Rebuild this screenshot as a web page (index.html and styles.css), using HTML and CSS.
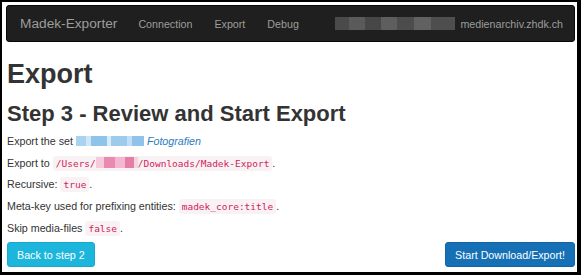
FILE: index.html
```html
<!DOCTYPE html>
<html lang="en">
<head>
    <meta charset="UTF-8">
    <meta name="viewport" content="width=device-width, initial-scale=1.0">
    <title>Madek-Exporter - Export</title>
    <link rel="stylesheet" href="styles.css">
</head>
<body>
<div class="window">
    <div class="navbar">
        <a class="brand" href="#">Madek-Exporter</a>
        <ul class="nav">
            <li><a href="#">Connection</a></li>
            <li><a href="#">Export</a></li>
            <li><a href="#">Debug</a></li>
        </ul>
        <div class="nav-right">
            <span class="blur blur-user"></span>
            <span class="host">medienarchiv.zhdk.ch</span>
        </div>
    </div>
    <div class="content">
        <h1>Export</h1>
        <h2>Step 3 - Review and Start Export</h2>
        <p>Export the set <span class="blur blur-set"></span> <a class="set-link" href="#">Fotografien</a></p>
        <p>Export to <code>/Users/<span class="blur blur-path"></span>/Downloads/Madek-Export</code>.</p>
        <p>Recursive: <code>true</code>.</p>
        <p>Meta-key used for prefixing entities: <code>madek_core:title</code>.</p>
        <p>Skip media-files <code>false</code>.</p>
        <div class="actions">
            <button class="btn btn-info">Back to step 2</button>
            <button class="btn btn-primary">Start Download/Export!</button>
        </div>
    </div>
</div>
</body>
</html>
```

FILE: styles.css
```css
html, body {
    margin: 0;
    padding: 0;
    background: #000;
}
body {
    font-family: "Liberation Sans", Arial, sans-serif;
    color: #333;
}
.window {
    box-sizing: border-box;
    height: 275px;
    background: #fff;
    border-style: solid;
    border-color: #000;
    border-width: 2px 4px 3px 2px;
    padding: 3px 2px 0 4px;
}

/* top bar */
.navbar {
    display: flex;
    align-items: center;
    height: 37px;
    background: #1f1f1f;
    border: 1px solid #080808;
    border-radius: 3px;
    box-sizing: border-box;
    padding: 0 11px 0 13px;
}
.navbar a {
    text-decoration: none;
    color: #9d9d9d;
}
.brand {
    font-size: 13.7px;
    margin-right: 10px;
}
.nav {
    display: flex;
    list-style: none;
    margin: 0;
    padding: 0;
}
.nav li a {
    display: block;
    font-size: 10.7px;
    padding: 0 11px;
}
.nav-right {
    margin-left: auto;
    display: flex;
    align-items: center;
    gap: 5px;
    font-size: 10.7px;
    color: #9d9d9d;
}

/* pixelated placeholders for hidden names */
.blur {
    display: inline-block;
    vertical-align: middle;
}
.blur-user {
    width: 120px;
    height: 13px;
    background:
        linear-gradient(90deg, #4a4a4a 0 12%, #5a5a5a 12% 25%, #474747 25% 38%, #5e5e5e 38% 52%, #4c4c4c 52% 66%, #616161 66% 80%, #4e4e4e 80% 100%);
}
.blur-set {
    width: 68px;
    height: 10px;
    margin-top: -2px;
    background:
        linear-gradient(90deg, #a9d3ef 0 15%, #cfe6f6 15% 22%, #8fc4ea 22% 45%, #d8ebf8 45% 52%, #9ccbec 52% 75%, #c2def3 75% 82%, #8fc3ea 82% 100%);
}
.blur-path {
    width: 42px;
    height: 11px;
    vertical-align: -1px;
    background:
        linear-gradient(90deg, #f6c9db 0 20%, #e98bb0 20% 45%, #f3b8cf 45% 70%, #e47ea6 70% 90%, #f7d3e1 90% 100%);
}

/* page body */
.content {
    padding-left: 1px;
}
h1 {
    font-size: 27px;
    font-weight: bold;
    margin: 18px 0 0;
    line-height: 1.1;
}
h2 {
    font-size: 22px;
    font-weight: bold;
    margin: 12px 0 8px;
    line-height: 1.1;
}
p {
    font-size: 10.7px;
    line-height: 15px;
    margin: 0 0 6.7px;
}
.set-link {
    color: #2a7cc0;
    font-style: italic;
    text-decoration: none;
}
code {
    font-family: "DejaVu Sans Mono", "Liberation Mono", monospace;
    font-size: 9.5px;
    color: #d0245a;
    background: #f9f2f4;
    border-radius: 3px;
    padding: 2px 3px;
}
.actions {
    display: flex;
    justify-content: space-between;
    margin-top: 6px;
}
.btn {
    font-family: "Liberation Sans", Arial, sans-serif;
    font-size: 10.7px;
    color: #fff;
    border: 1px solid transparent;
    border-radius: 3px;
    height: 25px;
    padding: 0 9px;
    cursor: pointer;
}
.btn-info {
    background: #1cb6dc;
    border-color: #17a9cd;
}
.btn-primary {
    background: #1570b5;
    border-color: #1165a6;
}
```
